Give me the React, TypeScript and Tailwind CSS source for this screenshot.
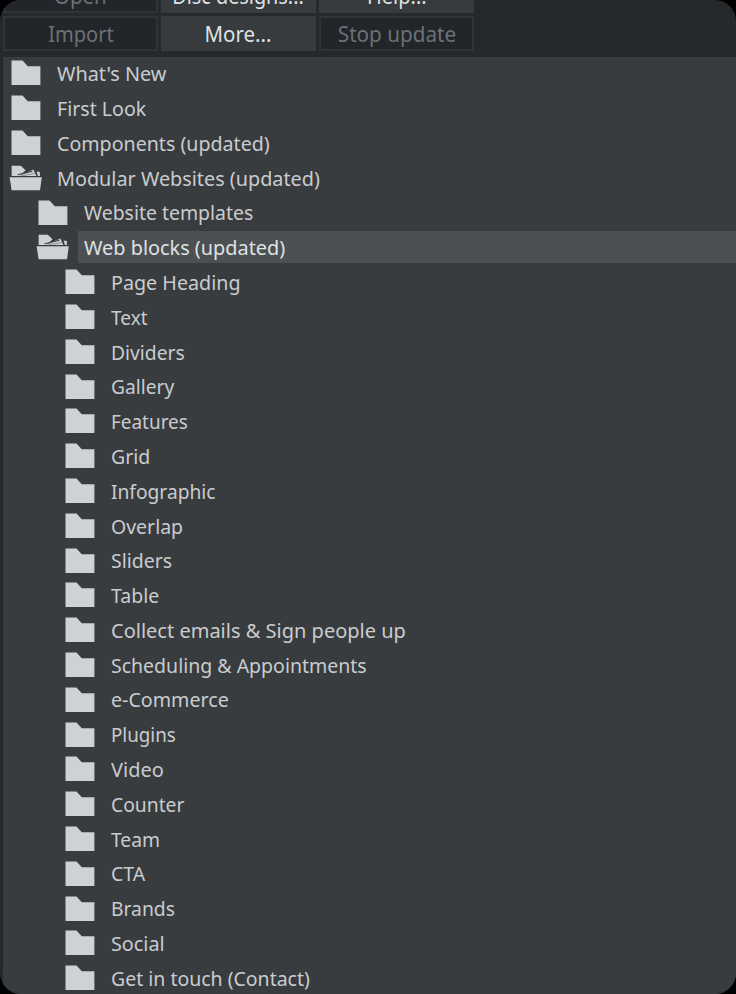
type Item = { label: string; level: number; stretch: number; open?: boolean; selected?: boolean };

const blocks: [string, number][] = [
  ['Page Heading', 0.961],
  ['Text', 0.93],
  ['Dividers', 0.94],
  ['Gallery', 0.937],
  ['Features', 0.923],
  ['Grid', 0.95],
  ['Infographic', 0.936],
  ['Overlap', 0.95],
  ['Sliders', 0.95],
  ['Table', 0.95],
  ['Collect emails & Sign people up', 0.976],
  ['Scheduling & Appointments', 0.951],
  ['e-Commerce', 0.958],
  ['Plugins', 0.915],
  ['Video', 0.975],
  ['Counter', 0.94],
  ['Team', 0.94],
  ['CTA', 0.95],
  ['Brands', 0.94],
  ['Social', 0.965],
  ['Get in touch (Contact)', 0.95],
];

const items: Item[] = [
  { label: "What's New", level: 0, stretch: 0.968 },
  { label: 'First Look', level: 0, stretch: 0.955 },
  { label: 'Components (updated)', level: 0, stretch: 0.957 },
  { label: 'Modular Websites (updated)', level: 0, stretch: 0.966, open: true },
  { label: 'Website templates', level: 1, stretch: 0.948 },
  { label: 'Web blocks (updated)', level: 1, stretch: 0.969, open: true, selected: true },
  ...blocks.map(([label, stretch]) => ({ label, stretch, level: 2 })),
];

const indents = ['pl-[6px]', 'pl-[33px]', 'pl-[60px]'];

function Folder({ open }: { open?: boolean }) {
  return (
    <svg width="34" height="26" viewBox="0 0 34 26" className="shrink-0 fill-[#ced1d5]">
      {open ? (
        <>
          <path d="M2.6 11V.7h9.2l4.8 4.6-5.8 5.7z" />
          <path d="M10 11 24.4 4.6l3 6.4z" />
          <path d="m27.6 6.4 3.3.6v4h-2z" />
          <path d="m8.6 9.7 14.8-3.4" className="stroke-[#393c3f]" strokeWidth="1.1" />
          <path d="m12.6 10.8 14-2.4" className="stroke-[#6c7073]" strokeWidth=".7" />
          <path d="M.6 12.2h32.2l-1.8 13.1H2.6z" />
        </>
      ) : (
        <path d="M2.5.6H13.5l5.3 5.6H31.4V25H2.5z" />
      )}
    </svg>
  );
}

function Button({ label, disabled, width = '' }: { label: string; disabled?: boolean; width?: string }) {
  return (
    <div
      className={`flex h-[35px] w-[155px] shrink-0 items-center justify-center whitespace-nowrap text-[22px] leading-none ${
        disabled ? 'border-2 border-[#303437] bg-[#22262a] pb-[2px] text-[#6d7174]' : 'bg-[#373b3d] pb-[2px] text-[#dfe2e4]'
      }`}
    >
      <span className={width}>{label}</span>
    </div>
  );
}

export default function App() {
  return (
    <div className="h-[994px] w-[736px] overflow-hidden bg-black font-['Noto_Sans','Open_Sans',sans-serif]">
      <div className="flex h-full w-full flex-col overflow-hidden rounded-[21px] bg-[#25292c]">
        <div className="flex h-[57px] shrink-0 flex-col justify-end gap-[3px] pb-[6px] pl-[3px]">
          <div className="flex gap-[3px]">
            <Button label="Open" disabled width="scale-x-[.93]" />
            <Button label="Disc designs..." width="scale-x-[.9]" />
            <Button label="Help..." width="scale-x-[.91]" />
          </div>
          <div className="flex gap-[3px]">
            <Button label="Import" disabled width="scale-x-[.91]" />
            <Button label="More..." width="scale-x-[.93]" />
            <Button label="Stop update" disabled width="scale-x-[.94]" />
          </div>
        </div>
        <div className="ml-[3px] min-h-0 flex-1 overflow-hidden bg-[#393c3f]">
          <div className="-mt-[1px]">
            {items.map(({ label, level, stretch, open, selected }) => (
              <div key={label} className={`flex h-[34.81px] items-center ${indents[level]}`}>
                <Folder open={open} />
                <div
                  className={`ml-[7.5px] flex h-[32px] flex-1 items-center pl-[6.5px] ${
                    selected ? 'bg-[#4c5052] text-[#dfe2e4]' : 'text-[#c9cccf]'
                  }`}
                >
                  <span
                    className="origin-left whitespace-nowrap text-[20.5px] leading-none"
                    style={{ transform: `scaleX(${stretch})` }}
                  >
                    {label}
                  </span>
                </div>
              </div>
            ))}
          </div>
        </div>
      </div>
    </div>
  );
}
